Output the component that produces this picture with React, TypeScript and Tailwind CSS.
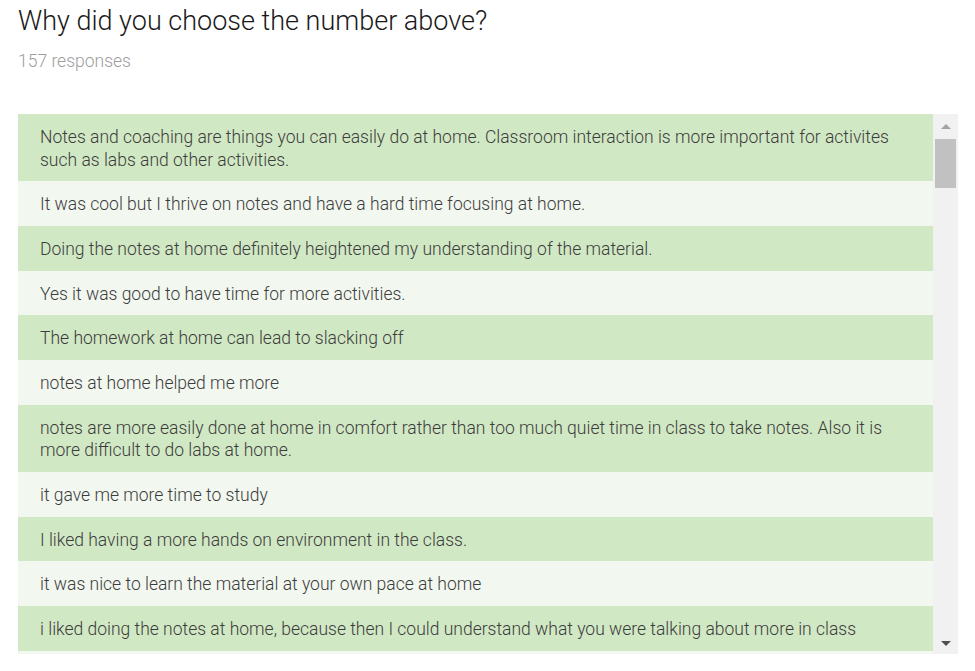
import React from "react";

const rows: string[] = [
  "Notes and coaching are things you can easily do at home. Classroom interaction is more important for activites such as labs and other activities.",
  "It was cool but I thrive on notes and have a hard time focusing at home.",
  "Doing the notes at home definitely heightened my understanding of the material.",
  "Yes it was good to have time for more activities.",
  "The homework at home can lead to slacking off",
  "notes at home helped me more",
  "notes are more easily done at home in comfort rather than too much quiet time in class to take notes. Also it is more difficult to do labs at home.",
  "it gave me more time to study",
  "I liked having a more hands on environment in the class.",
  "it was nice to learn the material at your own pace at home",
  "i liked doing the notes at home, because then I could understand what you were talking about more in class",
];

export default function App() {
  return (
    <div
      className="w-[975px] h-[671px] bg-white overflow-hidden"
      style={{ fontFamily: "Roboto, 'Liberation Sans', sans-serif" }}
    >
      <div className="pl-[18px] pt-[4px]">
        <div className="text-[27px] leading-[34px] text-[#1a1a1a] font-light">
          Why did you choose the number above?
        </div>
        <div className="mt-[11px] text-[17.5px] leading-[24px] text-[#9e9e9e] font-light">
          157 responses
        </div>
      </div>
      <div className="ml-[18px] mt-[41px] w-[940px] h-[540px] flex overflow-hidden">
        <div className="flex-1 flex flex-col overflow-hidden">
          {rows.map((t, i) => (
            <div
              key={i}
              className={
                (i % 2 === 0 ? "bg-[#d1e8c4]" : "bg-[#f2f7f0]") +
                " shrink-0 pl-[22px] pr-[30px] pt-[12px] pb-[10px] text-[17.5px] leading-[22.67px] font-light text-[#3c3c3c]"
              }
            >
              {t}
            </div>
          ))}
          <div className="shrink-0 h-[45px] bg-[#f2f7f0]" />
        </div>
        <div className="w-[25px] bg-[#f1f1f1] flex flex-col items-center relative">
          <div className="h-[25px] flex items-center justify-center">
            <div className="w-0 h-0 border-l-[5px] border-r-[5px] border-b-[5px] border-l-transparent border-r-transparent border-b-[#a3a3a3]" />
          </div>
          <div className="w-[21px] h-[49px] bg-[#c1c1c1]" />
          <div className="absolute bottom-[8px] left-0 right-0 flex justify-center">
            <div className="w-0 h-0 border-l-[5px] border-r-[5px] border-t-[5px] border-l-transparent border-r-transparent border-t-[#505050]" />
          </div>
        </div>
      </div>
    </div>
  );
}
